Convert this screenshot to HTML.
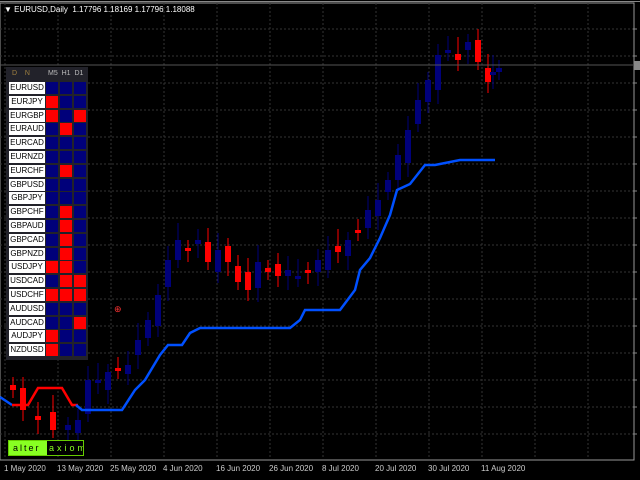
<!DOCTYPE html>
<html><head><meta charset="utf-8"><style>
body{margin:0;width:640px;height:480px;background:#000;overflow:hidden;font-family:"Liberation Sans",sans-serif;position:relative}
svg{position:absolute;left:0;top:0}
.t{position:absolute;color:#fff;font-size:8px;white-space:nowrap}
#tbl{position:absolute;left:6px;top:67px;width:82px;height:293px;background:#22222a}
.row{position:absolute;left:3px;height:12px}
.nm{position:absolute;left:0;top:0;width:36px;height:12px;background:#fff;color:#000;font-size:8px;line-height:12px;text-align:center;overflow:hidden}
.c{position:absolute;top:0;width:12px;height:12px}
.R{background:#ff0000}.B{background:#00007a}
</style></head><body>
<svg id="s" width="640" height="480"></svg>
<div class="t" style="left:4px;top:5px;font-size:8px">▼ EURUSD,Daily&nbsp; 1.17796 1.18169 1.17796 1.18088</div>
<div id="tbl">
<div class="t" style="left:6px;top:3px;color:#a08040;font-size:7px">D&nbsp;&nbsp;&nbsp;&nbsp;N</div>
<div class="t" style="left:42px;top:3px;color:#bbb;font-size:7px">M5&nbsp;&nbsp;H1&nbsp;&nbsp;D1</div>
</div>
<div style="position:absolute;left:8px;top:440px;width:74px;height:14px;border:1px solid #6c0;background:#000;font-size:9px;line-height:14px;white-space:nowrap;overflow:hidden">
<span style="background:#8f2;color:#000;display:inline-block;width:34px;padding-left:4px;letter-spacing:2px">alter</span><span style="color:#8f2;letter-spacing:3px;padding-left:2px">axiom</span></div>
<div class="t" style="left:4px;top:464px;color:#ccc">1 May 2020</div>
<div class="t" style="left:57px;top:464px;color:#ccc">13 May 2020</div>
<div class="t" style="left:110px;top:464px;color:#ccc">25 May 2020</div>
<div class="t" style="left:163px;top:464px;color:#ccc">4 Jun 2020</div>
<div class="t" style="left:216px;top:464px;color:#ccc">16 Jun 2020</div>
<div class="t" style="left:269px;top:464px;color:#ccc">26 Jun 2020</div>
<div class="t" style="left:322px;top:464px;color:#ccc">8 Jul 2020</div>
<div class="t" style="left:375px;top:464px;color:#ccc">20 Jul 2020</div>
<div class="t" style="left:428px;top:464px;color:#ccc">30 Jul 2020</div>
<div class="t" style="left:481px;top:464px;color:#ccc">11 Aug 2020</div>
<script>
(function(){
var s=document.getElementById('s'),h='';
h+='<rect x="0" y="3" width="634" height="457" fill="none" stroke="#999" stroke-width="1"/>';
h+='<line x1="0" y1="1.5" x2="640" y2="1.5" stroke="#888"/>';
for(var x=5;x<634;x+=53)h+='<line x1="'+x+'" y1="3" x2="'+x+'" y2="459" stroke="#333" stroke-dasharray="2,2"/>';
for(var y=29;y<460;y+=27)h+='<line x1="0" y1="'+y+'" x2="633" y2="'+y+'" stroke="#333" stroke-dasharray="2,2"/><line x1="633" y1="'+y+'" x2="637" y2="'+y+'" stroke="#888"/>';
var P=[[10,390],[20,410],[35,420],[50,430],[65,425],[75,420],[85,380],[95,380],[105,372],[115,370],[125,365],[135,340],[145,320],[155,295],[165,260],[175,240],[185,250],[195,240],[205,262],[215,250],[225,262],[235,282],[245,290],[255,262],[265,272],[275,276],[285,270],[295,276],[305,270],[315,260],[325,250],[335,252],[345,240],[355,230],[365,210],[375,200],[385,180],[395,155],[405,130],[415,100],[425,80],[435,55],[445,50],[455,60],[465,42],[475,62],[485,82],[490,72],[496,68]];
var prev=395;
for(var i=0;i<P.length;i++){var cx=P[i][0],c=P[i][1],o=prev+((i*37)%11-5)*2;var up=c<o;var col=up?'#00007a':'#ff0000';
var tp=Math.min(o,c),bh=Math.max(3,Math.abs(o-c));
h+='<line x1="'+(cx+3)+'" y1="'+(tp-8-(i%4)*3)+'" x2="'+(cx+3)+'" y2="'+(tp+bh+8+(i%3)*3)+'" stroke="'+col+'"/>';
h+='<rect x="'+cx+'" y="'+tp+'" width="6" height="'+bh+'" fill="'+col+'"/>';prev=c;}
h+='<polyline fill="none" stroke="#0050ff" stroke-width="2.5" points="0,397 12,405 "/>';
h+='<polyline fill="none" stroke="#ff0000" stroke-width="2.5" points="12,405 28,405 38,388 62,388 72,405 78,405"/>';
h+='<polyline fill="none" stroke="#0050ff" stroke-width="2.5" points="76,405 82,410 122,410 135,390 145,380 160,355 168,345 182,345 190,333 200,328 290,328 300,320 305,310 340,310 355,290 360,270 370,258 380,238 390,215 397,190 410,184 425,165 435,165 460,160 495,160"/>';
h+='<line x1="0" y1="65" x2="633" y2="65" stroke="#555"/><rect x="634" y="61" width="6" height="9" fill="#888"/>';
h+='<text x="114" y="312" fill="#f33" font-size="9" font-family="Liberation Sans">⊕</text>';
s.innerHTML=h;
var d=[['EURUSD','BBB'],['EURJPY','RBB'],['EURGBP','RBR'],['EURAUD','BRB'],['EURCAD','BBB'],['EURNZD','BBB'],['EURCHF','BRB'],['GBPUSD','BBB'],['GBPJPY','BBB'],['GBPCHF','BRB'],['GBPAUD','BRB'],['GBPCAD','BRB'],['GBPNZD','BRB'],['USDJPY','RRB'],['USDCAD','BRR'],['USDCHF','RRR'],['AUDUSD','BBB'],['AUDCAD','BBR'],['AUDJPY','RBB'],['NZDUSD','RBB']];
var t=document.getElementById('tbl'),q='';
for(var i=0;i<d.length;i++){q+='<div class="row" style="top:'+(15+i*13.8)+'px"><div class="nm">'+d[i][0]+'</div>';
for(var j=0;j<3;j++)q+='<div class="c '+d[i][1][j]+'" style="left:'+(37+j*14)+'px"></div>';q+='</div>';}
t.insertAdjacentHTML('beforeend',q);
})();
</script>
</body></html>
